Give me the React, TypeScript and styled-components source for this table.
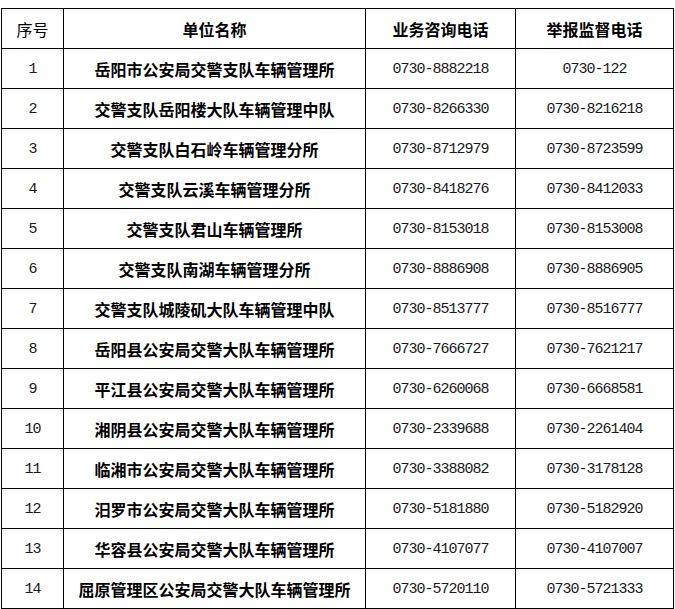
import * as React from "react";
import styled, { createGlobalStyle } from "styled-components";

const GlobalStyle = createGlobalStyle`
  html, body {
    margin: 0;
    padding: 0;
    background: #ffffff;
  }
  body {
    font-family: "Noto Sans CJK SC", "Liberation Sans", sans-serif;
    color: #000;
  }
`;

const Page = styled.div`
  padding: 8px 0 0 1px;
`;

const Table = styled.table`
  border-collapse: collapse;
  table-layout: fixed;
  width: 672px;
`;

const Cell = styled.td<{ $bold?: boolean; $mono?: boolean }>`
  border: 1px solid #000;
  height: ${(p) => (p.$mono ? "37px" : "39px")};
  padding: ${(p) => (p.$mono ? "2px 0 0" : "0")};
  text-align: center;
  vertical-align: middle;
  font-size: ${(p) => (p.$mono ? "15px" : "16px")};
  font-weight: ${(p) => (p.$bold ? 700 : 400)};
  font-family: ${(p) =>
    p.$mono
      ? `"Liberation Mono", "DejaVu Sans Mono", monospace`
      : `"Noto Sans CJK SC", "Liberation Sans", sans-serif`};
  letter-spacing: ${(p) => (p.$mono ? "-1px" : "0")};
  color: ${(p) => (p.$mono ? "#1a1a1a" : "#000")};
  white-space: nowrap;
  line-height: 1;
`;

const HeadCell = styled(Cell).attrs({ as: "th" })``;

const rows: [string, string, string][] = [
  ["岳阳市公安局交警支队车辆管理所", "0730-8882218", "0730-122"],
  ["交警支队岳阳楼大队车辆管理中队", "0730-8266330", "0730-8216218"],
  ["交警支队白石岭车辆管理分所", "0730-8712979", "0730-8723599"],
  ["交警支队云溪车辆管理分所", "0730-8418276", "0730-8412033"],
  ["交警支队君山车辆管理所", "0730-8153018", "0730-8153008"],
  ["交警支队南湖车辆管理分所", "0730-8886908", "0730-8886905"],
  ["交警支队城陵矶大队车辆管理中队", "0730-8513777", "0730-8516777"],
  ["岳阳县公安局交警大队车辆管理所", "0730-7666727", "0730-7621217"],
  ["平江县公安局交警大队车辆管理所", "0730-6260068", "0730-6668581"],
  ["湘阴县公安局交警大队车辆管理所", "0730-2339688", "0730-2261404"],
  ["临湘市公安局交警大队车辆管理所", "0730-3388082", "0730-3178128"],
  ["汨罗市公安局交警大队车辆管理所", "0730-5181880", "0730-5182920"],
  ["华容县公安局交警大队车辆管理所", "0730-4107077", "0730-4107007"],
  ["屈原管理区公安局交警大队车辆管理所", "0730-5720110", "0730-5721333"],
];

const App: React.FC = () => {
  return (
    <>
      <GlobalStyle />
      <Page>
        <Table>
          <colgroup>
            <col style={{ width: 62 }} />
            <col style={{ width: 302 }} />
            <col style={{ width: 150 }} />
            <col style={{ width: 158 }} />
          </colgroup>
          <thead>
            <tr>
              <HeadCell>序号</HeadCell>
              <HeadCell $bold>单位名称</HeadCell>
              <HeadCell $bold>业务咨询电话</HeadCell>
              <HeadCell $bold>举报监督电话</HeadCell>
            </tr>
          </thead>
          <tbody>
            {rows.map((r, i) => (
              <tr key={i}>
                <Cell $mono>{i + 1}</Cell>
                <Cell $bold>{r[0]}</Cell>
                <Cell $mono>{r[1]}</Cell>
                <Cell $mono>{r[2]}</Cell>
              </tr>
            ))}
          </tbody>
        </Table>
      </Page>
    </>
  );
};

export default App;
